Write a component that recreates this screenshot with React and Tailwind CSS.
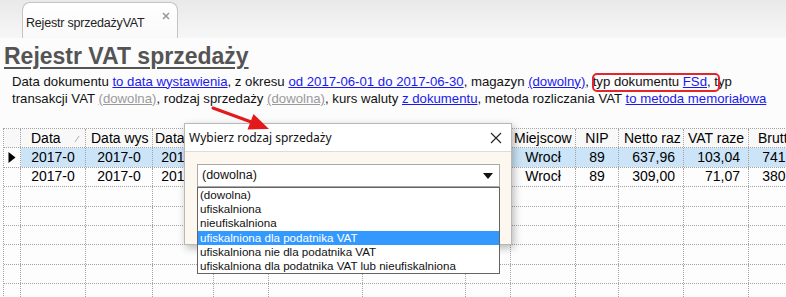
import React from "react";

const ARIAL = { fontFamily: '"Liberation Sans", Arial, sans-serif' };

const widths = [17, 65, 67, 61, 55, 94, 103, 45, 65, 43, 65, 65, 65];

function Cell({ w, className = "", children }) {
  return (
    <div
      className={"shrink-0 h-full border-r border-dotted border-[#a3a3a3] overflow-hidden whitespace-nowrap flex items-center " + className}
      style={{ width: w }}
    >
      {children}
    </div>
  );
}

function Row({ children, className = "" }) {
  return (
    <div className={"flex h-[19.4px] border-b border-dotted border-[#a3a3a3] " + className}>{children}</div>
  );
}

export default function App() {
  const items = [
    "(dowolna)",
    "ufiskalniona",
    "nieufiskalniona",
    "ufiskalniona dla podatnika VAT",
    "ufiskalniona nie dla podatnika VAT",
    "ufiskalniona dla podatnika VAT lub nieufiskalniona",
  ];
  const link = "text-[#1a1aee] underline";
  const glink = "text-[#9a9a9a] underline";

  const dataRows = [
    ["2017-0", "2017-0", "2017-0", "", "", "", "", "Wrocł", "89", "637,96", "103,04", "741,00"],
    ["2017-0", "2017-0", "2017-0", "", "", "", "", "Wrocł", "89", "309,00", "71,07", "380,07"],
  ];

  return (
    <div className="relative w-[786px] h-[297px] overflow-hidden bg-[#fcfcfc] text-black" style={ARIAL}>
      {/* tab bar */}
      <div className="h-[38px] bg-gradient-to-b from-[#e9e9e9] to-[#f7f7f7] flex items-end pl-[22px]">
        <div className="relative w-[156px] h-[36px] bg-gradient-to-b from-[#ffffff] to-[#f9f9f9] border border-b-0 border-[#c4c4c4] rounded-t-[8px] flex items-center">
          <span className="pl-[3px] pt-[6px] text-[12.5px] text-[#222] tracking-[-0.2px]">Rejestr sprzedażyVAT</span>
          <svg className="absolute left-[139px] top-[9px]" width="8" height="8" viewBox="0 0 8 8">
            <path d="M1 1 L7 7 M7 1 L1 7" stroke="#9a9a9a" strokeWidth="1.6" />
          </svg>
        </div>
      </div>

      {/* title */}
      <div className="mt-[3px] pl-[4px] leading-[30px] text-[23px] font-bold text-[#545454] underline decoration-[2px] underline-offset-[3px]">
        Rejestr VAT sprzedaży
      </div>

      {/* description */}
      <div className="mt-[1.5px] pl-[12px] pr-[4px] text-[13.2px] leading-[17px] text-[#111] whitespace-nowrap">
        Data dokumentu <span className={link}>to data wystawienia</span>, z okresu{" "}
        <span className={link}>od 2017-06-01 do 2017-06-30</span>, magazyn{" "}
        <span className={link}>(dowolny)</span>, typ dokumentu <span className={link}>FSd</span>, typ
        <br />
        transakcji VAT <span className={glink}>(dowolna)</span>, rodzaj sprzedaży{" "}
        <span className={glink}>(dowolna)</span>, kurs waluty <span className={link}>z dokumentu</span>, metoda
        rozliczania VAT <span className={link}>to metoda memoriałowa</span>
      </div>

      {/* grid */}
      <div className="mt-[21.5px] ml-[3px] border-l border-t border-dotted border-[#a3a3a3] bg-[#fdfdfd] w-[900px] text-[14px]">
        <Row className="bg-[#f8f8f8]">
          <Cell w={widths[0]} />
          <Cell w={widths[1]} className="pl-[10px] relative">
            Data
            <svg className="absolute left-[53px] top-[6px]" width="6" height="8" viewBox="0 0 6 8">
              <path d="M1 7 L5 1" stroke="#b0b0b0" strokeWidth="1" />
            </svg>
          </Cell>
          <Cell w={widths[2]} className="pl-[5px]">Data wys</Cell>
          <Cell w={widths[3]} className="pl-[2px]">Data</Cell>
          <Cell w={widths[4]} />
          <Cell w={widths[5]} />
          <Cell w={widths[6]} />
          <Cell w={widths[7]} />
          <Cell w={widths[8]} className="pl-[3px]">Miejscow</Cell>
          <Cell w={widths[9]} className="justify-center">NIP</Cell>
          <Cell w={widths[10]} className="pl-[5px]">Netto raz</Cell>
          <Cell w={widths[11]} className="pl-[4px]">VAT raze</Cell>
          <Cell w={widths[12]} className="pl-[9px]">Brutto</Cell>
        </Row>
        {dataRows.map((r, i) => (
          <Row key={i}>
            <Cell w={widths[0]} className="bg-[#fdfdfd] justify-center">
              {i === 0 && (
                <svg width="8" height="11" viewBox="0 0 8 11">
                  <path d="M0.5 0 L7.5 5.5 L0.5 11 Z" fill="#000" />
                </svg>
              )}
            </Cell>
            {r.map((v, j) => {
              const right = j >= 9;
              return (
                <Cell
                  key={j}
                  w={widths[j + 1]}
                  className={(i === 0 ? "bg-[#cce4f7] " : "") + (right ? "justify-end pr-[8px]" : "justify-center")}
                >
                  {v}
                </Cell>
              );
            })}
          </Row>
        ))}
        {[0, 1, 2, 3, 4, 5].map((k) => (
          <Row key={"e" + k}>
            {widths.map((w, j) => (
              <Cell key={j} w={w} />
            ))}
          </Row>
        ))}
      </div>

      {/* red highlight rectangle */}
      <div className="absolute left-[592px] top-[73px] w-[128px] h-[19px] border-2 border-[#e3262b] rounded-[5px]" />

      {/* dialog */}
      <div className="absolute left-[184px] top-[123px] w-[328px] h-[122px] border border-[#b8b8b8] bg-[#fcf8ef] shadow-[2px_3px_8px_rgba(0,0,0,0.28)] flex flex-col">
        <div className="h-[27px] bg-white flex items-center justify-between pl-[4px] pr-[9px]" style={{ fontFamily: '"Noto Sans", "Open Sans", sans-serif' }}>
          <span className="text-[12px] text-[#111] pt-[1px]">Wybierz rodzaj sprzedaży</span>
          <svg width="12" height="12" viewBox="0 0 12 12">
            <path d="M1 1 L11 11 M11 1 L1 11" stroke="#222" strokeWidth="1.1" />
          </svg>
        </div>
        <div className="flex-1 border-t border-[#dcdcdc] pt-[12px] pl-[12px]" style={{ fontFamily: '"Liberation Sans", Tahoma, sans-serif' }}>
          <div className="relative w-[303px] h-[23px] bg-white border border-[#a9a9a9] flex items-center justify-between pl-[4px] pr-[6px] text-[12.5px] text-[#111]">
            <span>(dowolna)</span>
            <svg width="10" height="6" viewBox="0 0 10 6">
              <path d="M0 0 L10 0 L5 6 Z" fill="#111" />
            </svg>
            <div className="absolute left-[-1px] top-[22px] w-[303px] h-[87px] bg-white border border-[#646464] text-[11.6px]">
              {items.map((t, i) => (
                <div
                  key={i}
                  className={"h-[14.2px] leading-[14.2px] pl-[2px] whitespace-nowrap " + (i === 3 ? "bg-[#3399ff] text-white" : "text-[#111]")}
                >
                  {t}
                </div>
              ))}
            </div>
          </div>
        </div>
      </div>

      {/* red arrow */}
      <svg className="absolute left-0 top-0 pointer-events-none" width="786" height="297" viewBox="0 0 786 297">
        <line x1="213" y1="108" x2="254" y2="123" stroke="#e3191c" strokeWidth="3" strokeLinecap="round" />
        <path d="M269 129 L247.5 129.5 L253.5 114 Z" fill="#e3191c" />
      </svg>
    </div>
  );
}
